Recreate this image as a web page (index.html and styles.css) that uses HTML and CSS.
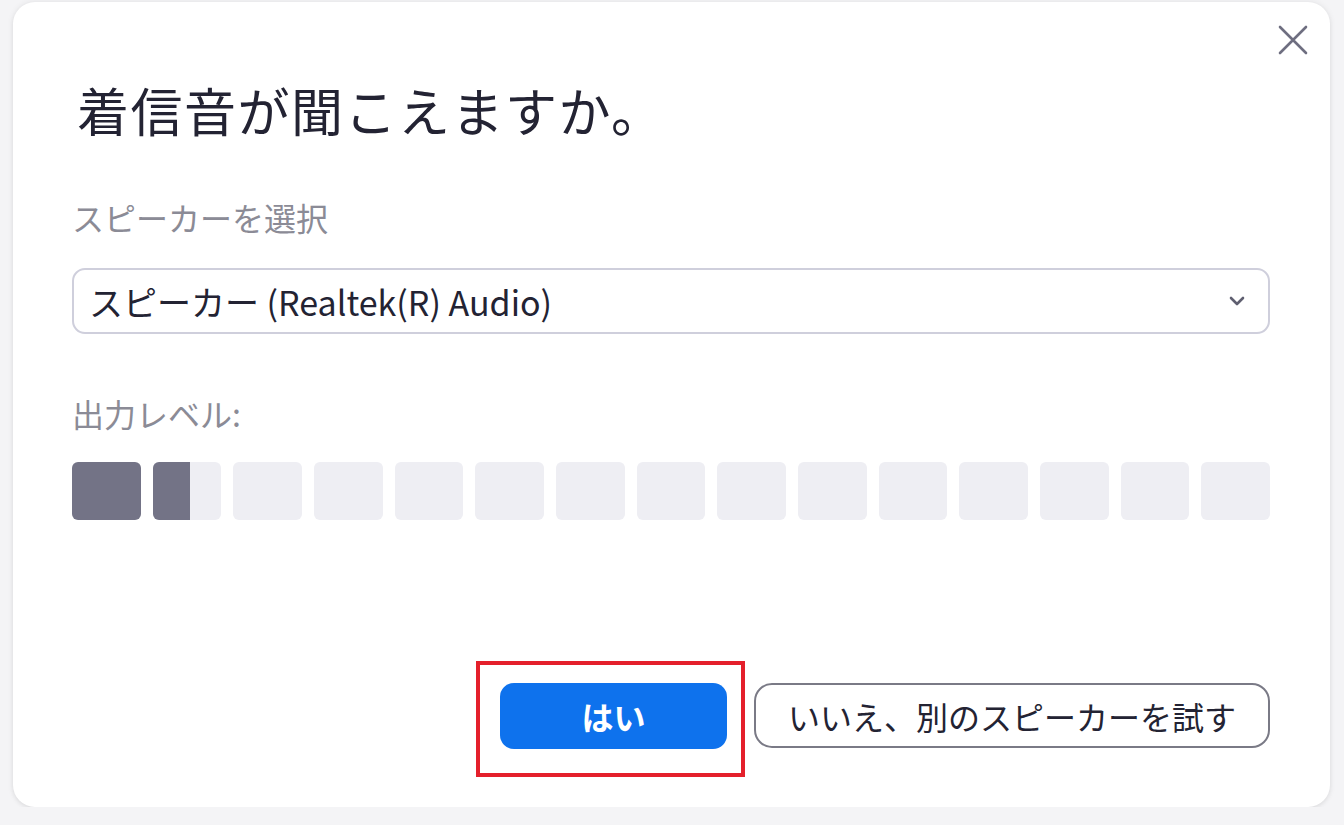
FILE: index.html
```html
<!DOCTYPE html>
<html lang="ja">
<head>
    <meta charset="UTF-8">
    <title>スピーカーのテスト</title>
    <link rel="stylesheet" href="styles.css">
</head>
<body>
    <div class="dialog">
        <button class="close" aria-label="閉じる">
            <svg width="32" height="32" viewBox="0 0 32 32">
                <path d="M3 3 L29 29 M29 3 L3 29" stroke="#6e6e80" stroke-width="2.6" stroke-linecap="round" fill="none"/>
            </svg>
        </button>

        <h1 class="title">着信音が聞こえますか。</h1>

        <div class="field-label">スピーカーを選択</div>
        <div class="select">
            <span class="select-text">スピーカー (Realtek(R) Audio)</span>
            <svg class="chevron" width="18" height="12" viewBox="0 0 18 12">
                <path d="M3 3 L9 9 L15 3" stroke="#5f5f70" stroke-width="2.6" stroke-linecap="round" stroke-linejoin="round" fill="none"/>
            </svg>
        </div>

        <div class="field-label level-label">出力レベル:</div>
        <div class="level">
            <div class="cell"><div class="fill" style="width: 100%"></div></div>
            <div class="cell"><div class="fill" style="width: 54%"></div></div>
            <div class="cell"></div>
            <div class="cell"></div>
            <div class="cell"></div>
            <div class="cell"></div>
            <div class="cell"></div>
            <div class="cell"></div>
            <div class="cell"></div>
            <div class="cell"></div>
            <div class="cell"></div>
            <div class="cell"></div>
            <div class="cell"></div>
            <div class="cell"></div>
            <div class="cell"></div>
        </div>

        <div class="actions">
            <div class="highlight">
                <button class="btn btn-primary">はい</button>
            </div>
            <button class="btn btn-outline">いいえ、別のスピーカーを試す</button>
        </div>
    </div>
</body>
</html>
```

FILE: styles.css
```css
body {
    margin: 0;
    background: #f4f4f6;
    font-family: "Noto Sans CJK JP", "Noto Sans", sans-serif;
    color: #232333;
}

.dialog {
    position: relative;
    box-sizing: border-box;
    width: 1317px;
    height: 805px;
    margin: 2px 0 0 13px;
    padding: 0 60px 0 59px;
    background: #fff;
    border-radius: 22px;
    box-shadow: 0 0 6px rgba(0,0,0,0.08), 0 2px 4px rgba(0,0,0,0.05);
    display: flex;
    flex-direction: column;
}

/* 右上の閉じるボタン */
.close {
    position: absolute;
    top: 22px;
    right: 21px;
    width: 32px;
    height: 32px;
    padding: 0;
    border: none;
    background: none;
    cursor: pointer;
}

.title {
    margin: 72px 0 0 5px;
    font-size: 52px;
    font-weight: normal;
    line-height: 72px;
    letter-spacing: 1.5px;
}

.field-label {
    margin-top: 48px;
    font-size: 32px;
    line-height: 46px;
    color: #8b8b96;
}

.select {
    margin-top: 28px;
    height: 66px;
    box-sizing: border-box;
    border: 2px solid #cfcfdc;
    border-radius: 13px;
    padding: 0 22px 0 15px;
    display: flex;
    align-items: center;
    justify-content: space-between;
}

.select-text {
    font-size: 34px;
    color: #232333;
}

.level-label {
    margin-top: 56px;
}

.level {
    margin-top: 26px;
    display: grid;
    grid-template-columns: repeat(15, 1fr);
    gap: 12px;
}

.cell {
    height: 58px;
    background: #eeeef3;
    border-radius: 6px;
    overflow: hidden;
}

.fill {
    height: 100%;
    background: #737386;
}

.actions {
    margin-top: auto;
    margin-bottom: 30px;
    display: flex;
    justify-content: flex-end;
    align-items: flex-start;
    gap: 9px;
}

/* 赤枠の注釈 */
.highlight {
    border: 4px solid #e4202b;
    padding: 18px 14px 24px 20px;
}

.btn {
    height: 66px;
    font-family: inherit;
    font-size: 32px;
    cursor: pointer;
}

.btn-primary {
    width: 227px;
    border: none;
    border-radius: 14px;
    background: #0e72ed;
    color: #fff;
    font-weight: bold;
}

.btn-outline {
    height: 65px;
    margin-top: 22px;
    padding: 0 32px;
    border: 2px solid #7a7a86;
    border-radius: 18px;
    background: #fff;
    color: #232333;
}
```
